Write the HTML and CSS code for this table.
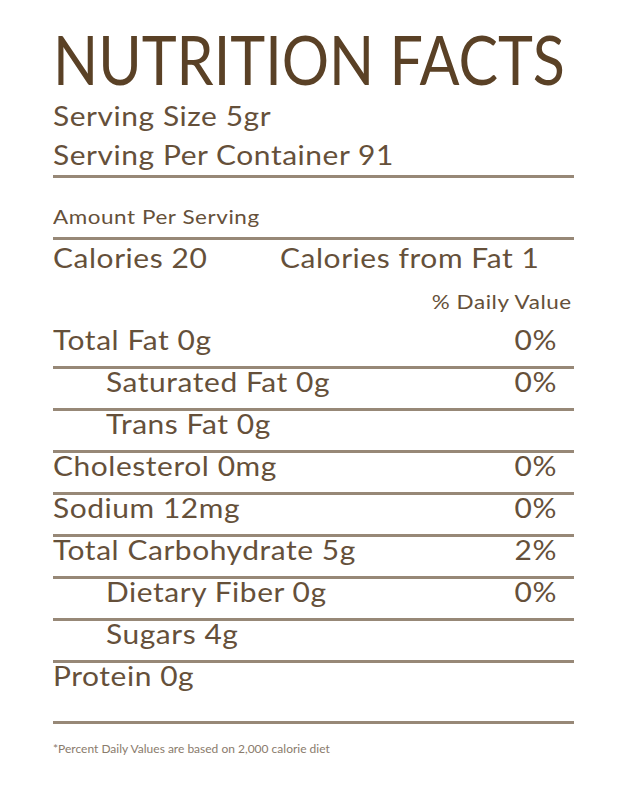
FILE: index.html
```html
<!DOCTYPE html>
<html>
<head>
<meta charset="utf-8">
<link rel="stylesheet" href="styles.css">
</head>
<body>
<div class="label">
  <h1 class="title"><span class="title-text">NUTRITION FACTS</span></h1>
  <div class="serving">
    <div class="serving-line"><span class="t">Serving Size 5gr</span></div>
    <div class="serving-line"><span class="t">Serving Per Container 91</span></div>
  </div>
  <div class="amount"><span class="t">Amount Per Serving</span></div>
  <div class="calories">
    <span class="cal-main"><span class="t">Calories 20</span></span>
    <span class="cal-fat"><span class="t">Calories from Fat 1</span></span>
  </div>
  <div class="dv-head"><span class="t tr">% Daily Value</span></div>
  <div class="row"><span class="name t">Total Fat 0g</span><span class="pct t tr">0%</span></div>
  <div class="row sub"><span class="name t">Saturated Fat 0g</span><span class="pct t tr">0%</span></div>
  <div class="row sub"><span class="name t">Trans Fat 0g</span></div>
  <div class="row"><span class="name t">Cholesterol 0mg</span><span class="pct t tr">0%</span></div>
  <div class="row"><span class="name t">Sodium 12mg</span><span class="pct t tr">0%</span></div>
  <div class="row"><span class="name t">Total Carbohydrate 5g</span><span class="pct t tr">2%</span></div>
  <div class="row sub"><span class="name t">Dietary Fiber 0g</span><span class="pct t tr">0%</span></div>
  <div class="row sub"><span class="name t">Sugars 4g</span></div>
  <div class="row protein"><span class="name t">Protein 0g</span></div>
  <div class="footnote">*Percent Daily Values are based on 2,000 calorie diet</div>
</div>
</body>
</html>
```

FILE: styles.css
```css
html, body {
  margin: 0;
  padding: 0;
  background: #ffffff;
}
body {
  font-family: Lato, "Open Sans", sans-serif;
  color: #65503a;
}
.label {
  width: 521px;
  margin-left: 53px;
  padding-top: 21px;
}
.t {
  display: inline-block;
  letter-spacing: 0.5px;
  transform: scaleX(1.15);
  transform-origin: left center;
  white-space: nowrap;
}
.t.tr {
  transform-origin: right center;
}
.title {
  margin: 0;
  font-weight: 400;
  font-size: 68px;
  line-height: 76px;
  color: #5a4126;
  white-space: nowrap;
}
.title-text {
  display: inline-block;
  transform: scaleX(0.87);
  transform-origin: left center;
}
.serving {
  border-bottom: 3px solid #978877;
}
.serving-line {
  font-size: 26px;
  line-height: 39px;
}
.amount {
  font-size: 19.5px;
  line-height: 24px;
  padding-top: 27px;
  padding-bottom: 8px;
  border-bottom: 3px solid #978877;
}
.calories {
  display: flex;
  font-size: 26px;
  line-height: 36px;
}
.cal-main {
  width: 227px;
}
.dv-head {
  text-align: right;
  font-size: 19.5px;
  line-height: 28px;
  padding-top: 12px;
  padding-bottom: 11px;
  padding-right: 2px;
}
.row {
  display: flex;
  justify-content: space-between;
  height: 39px;
  font-size: 26px;
  line-height: 27px;
  border-bottom: 3px solid #978877;
}
.row .pct {
  margin-right: 17px;
}
.row.sub .name {
  margin-left: 53px;
}
.row.protein {
  height: 58px;
}
.footnote {
  font-size: 12px;
  line-height: 14px;
  padding-top: 18px;
  color: #8a7b6c;
}
```
